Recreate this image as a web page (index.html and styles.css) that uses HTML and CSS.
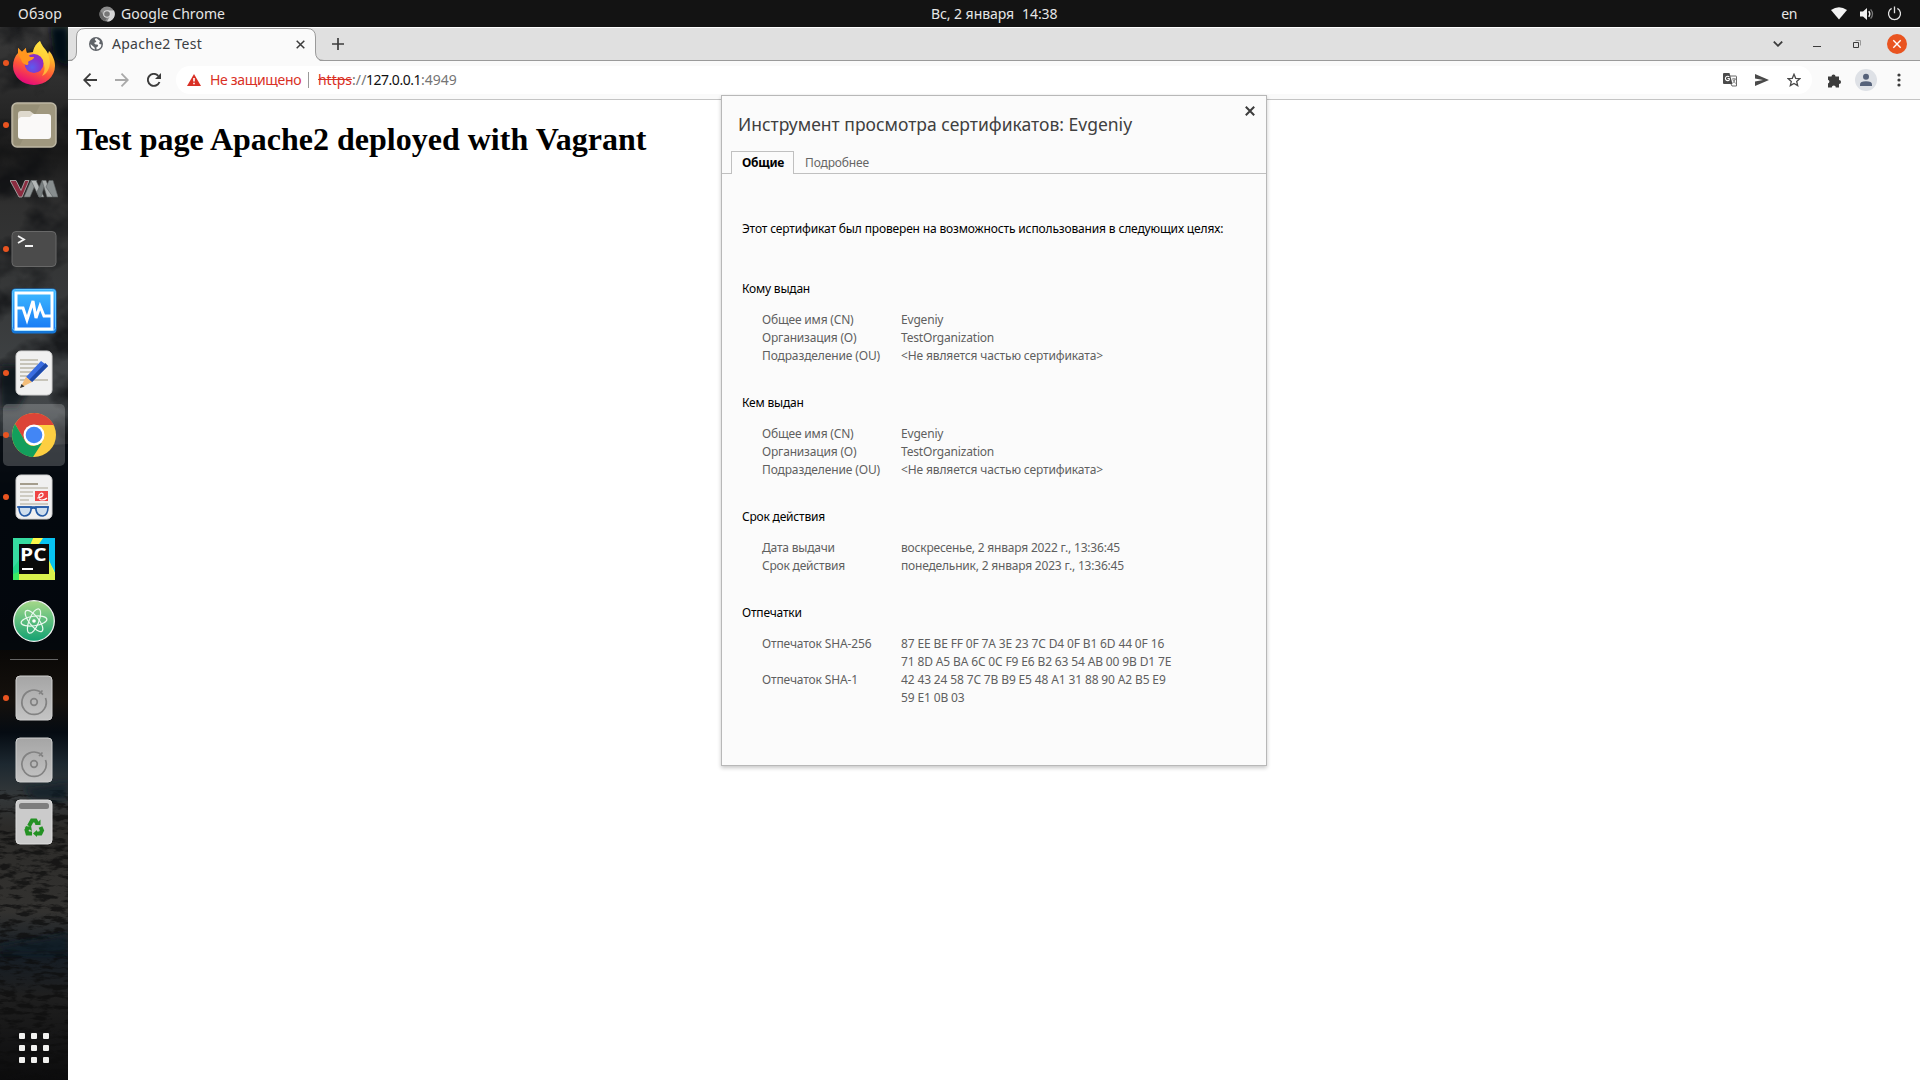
FILE: index.html
```html
<!DOCTYPE html>
<html lang="ru">
<head>
<meta charset="utf-8">
<title>Apache2 Test</title>
<link rel="stylesheet" href="styles.css">
</head>
<body>
<header class="topbar">
  <span class="overview">Обзор</span>
  <svg class="app-icon" width="16" height="16" viewBox="0 0 16 16"><circle cx="8" cy="8" r="7.6" fill="#8b8b8b"/><path d="M8 4.5h7a7.6 7.6 0 0 1-7 11.1l3.2-5.8z" fill="#d5d5d5"/><path d="M1.3 4.4 4.9 10 8 11.6l-2 3.7A7.6 7.6 0 0 1 1.3 4.4z" fill="#666"/><circle cx="8" cy="8" r="3.8" fill="#ddd"/><circle cx="8" cy="8" r="2.8" fill="#777"/></svg>
  <span class="app-name">Google Chrome</span>
  <span class="clock"><span>Вс, 2 января</span><span>14:38</span></span>
  <div class="tray">
    <span class="lang">en</span>
    <svg class="wifi" width="16" height="13" viewBox="0 0 16 13"><path d="M0 3Q8-2.6 16 3L8 12.6z" fill="#f2f2f2"/></svg>
    <svg class="sound" width="16" height="14" viewBox="0 0 16 14"><path d="M1 4.5h3L8 1v12L4 9.5H1z" fill="#f2f2f2"/><path d="M9.8 4.2q2 2.8 0 5.6" fill="none" stroke="#f2f2f2" stroke-width="1.4"/><path d="M11.6 2.4q3.8 4.6 0 9.2" fill="none" stroke="#777" stroke-width="1.3"/></svg>
    <svg width="15" height="15" viewBox="0 0 15 15" fill="none" stroke="#e2e2e2" stroke-width="1.3"><path d="M4.6 2.4a6 6 0 1 0 5.8 0M7.5.5v6.7"/></svg>
  </div>
</header>
<div class="workspace">
  <nav class="dock">
    <svg class="wallpaper" width="68" height="1053" viewBox="0 27 68 1053">
      <defs>
        <linearGradient id="sky" x1="0" y1="0" x2="0" y2="1"><stop offset="0" stop-color="#3a3a3a"/><stop offset=".06" stop-color="#2c2c2c"/><stop offset=".12" stop-color="#191919"/><stop offset=".17" stop-color="#303030"/><stop offset=".27" stop-color="#383a3b"/><stop offset=".36" stop-color="#43474a"/><stop offset=".41" stop-color="#1c2329"/><stop offset=".45" stop-color="#03070d"/><stop offset=".58" stop-color="#070605"/><stop offset=".64" stop-color="#15110d"/><stop offset=".67" stop-color="#050b12"/><stop offset=".7" stop-color="#1d2830"/><stop offset=".73" stop-color="#34383a"/><stop offset=".76" stop-color="#2c2b29"/><stop offset=".84" stop-color="#333230"/><stop offset=".88" stop-color="#151d25"/><stop offset=".92" stop-color="#1f1f1f"/><stop offset="1" stop-color="#0c0c0d"/></linearGradient>
        <filter id="cloud" x="0" y="0" width="1" height="1" color-interpolation-filters="sRGB"><feTurbulence type="fractalNoise" baseFrequency=".02 .025" numOctaves="4" seed="11"/><feColorMatrix values="0 0 0 0 .05  0 0 0 0 .055  0 0 0 0 .065  3 0 0 0 -1.35"/></filter>
        <filter id="sand" x="0" y="0" width="1" height="1" color-interpolation-filters="sRGB"><feTurbulence type="fractalNoise" baseFrequency=".06 .2" numOctaves="4" seed="3"/><feColorMatrix values="0 0 0 0 .05  0 0 0 0 .05  0 0 0 0 .05  5 0 0 0 -2.3"/></filter>
        <filter id="soft" x="-.5" y="-.5" width="2" height="2"><feGaussianBlur stdDeviation="3"/></filter>
      </defs>
      <rect y="27" width="68" height="1053" fill="url(#sky)"/>
      <rect y="27" width="68" height="420" filter="url(#cloud)" opacity=".75"/>
      <path d="M50 27h18v40L54 58z" fill="#030c14" filter="url(#soft)"/>
      <path d="M0 366h20l10 20-12 22H0z" fill="#0b151d" opacity=".8" filter="url(#soft)"/>
      <path d="M0 436q14 0 28 8 14 2 40 0v206H0z" fill="#04080e" opacity=".85"/>
      <rect y="790" width="68" height="290" filter="url(#sand)" opacity=".7"/>
      <path d="M24 788l44-6v18H34zM0 946l68-12v20H0z" fill="#0d1a26" opacity=".7" filter="url(#soft)"/>
    </svg>
    <div class="launchers">
      <div class="slot running"><svg width="42" height="44" viewBox="0 0 42 44">
        <defs><linearGradient id="fx" x1=".8" y1="0" x2=".4" y2="1"><stop offset="0" stop-color="#fff44f"/><stop offset=".35" stop-color="#ffb02a"/><stop offset=".65" stop-color="#ff5a36"/><stop offset="1" stop-color="#e60a7a"/></linearGradient><radialGradient id="fxp" cx=".4" cy=".7"><stop offset="0" stop-color="#5b5cf0"/><stop offset="1" stop-color="#8a2fc7"/></radialGradient></defs>
        <path d="M27 0c2 6 6 8 8 13l1-3c4 4 6 10 6 15a21 19 0 0 1-42 0C0 20 2 15 5 12V7l4 4 4-4v5c3 0 5-1 7-1 1-5 3-8 7-11z" fill="url(#fx)"/>
        <path d="M27 0c2 6 6 8 8 13 5 12-1 20-6 22 5-7 2-15-3-19-3-2-6-3-6-5 1-5 3-8 7-11z" fill="#ffe23f" opacity=".65"/>
        <circle cx="21" cy="22.500" r="9.500" fill="url(#fxp)"/>
        <path d="M5 12V7l4 4 4-4c0 5 2 6 4 9h4c0 3-4 3-6 5 2 4-3 4-6 0-1-4-3-5-4-9z" fill="#ff961e"/>
      </svg></div>
      <div class="slot running"><svg width="46" height="46" viewBox="0 0 46 46"><rect x="1" y="1" width="44" height="44" rx="5" fill="#a0987f" stroke="#bdb7a4" stroke-width="1.5"/><path d="M3 3h26L9 43H3z" fill="#857d68" opacity=".35"/><path d="M7 12q0-3 3-3h9l4 3v8H7z" fill="#ded9cd"/><path d="M7 19q0-3 3-4h9l3-3h15q3 0 3 3v19q0 3-3 3H10q-3 0-3-3z" fill="#faf9f8"/></svg></div>
      <div class="slot"><svg class="vm-icon" width="48" height="20" viewBox="0 0 48 20"><path d="M0 1.500h6l5 10 4-10h4L12 18H9z" fill="#8b2c40" stroke="#a9a5a6" stroke-width=".9"/><g stroke="#5d6263" stroke-width=".6"><path d="M14 18 21 1.500h6L20 18z" fill="#8f9595"/><path d="M21 1.500h5L34 18h-5z" fill="#b4b8b8"/><path d="M27 13 32 1.500h4L31 18h-2z" fill="#777d7e"/><path d="M32 1.500h4L43 18h-6z" fill="#a9adad"/><path d="M36 8l3-6.500h4L48 18h-5z" fill="#888e8f"/></g></svg></div>
      <div class="slot running"><svg width="46" height="36" viewBox="0 0 46 36"><rect x="1" y=".5" width="44" height="35" rx="4" fill="#4b4b4b" stroke="#686868"/><path d="M7 5l6 3.500L7 12M14 15h8" fill="none" stroke="#f5f5f5" stroke-width="1.800"/></svg></div>
      <div class="slot"><svg width="46" height="46" viewBox="0 0 46 46"><defs><linearGradient id="vb" x1="0" y1="0" x2="0" y2="1"><stop offset="0" stop-color="#3bb6ff"/><stop offset="1" stop-color="#197bf5"/></linearGradient></defs><rect x=".5" y=".5" width="45" height="45" rx="4" fill="#1577d8"/><rect x="1.500" y="1.500" width="43" height="41" rx="3" fill="url(#vb)" stroke="#63c8ff"/><rect x="5" y="5" width="36" height="36" fill="url(#vb)" stroke="#fff" stroke-width="3"/><path d="M6 20h6l4 12 6-19 3 17 4-12 4 10h7" fill="none" stroke="#fff" stroke-width="3"/></svg></div>
      <div class="slot running"><svg width="38" height="46" viewBox="0 0 38 46"><rect x="1" y="1" width="36" height="44" rx="5" fill="#f0f0f0" stroke="#d2d2d2"/><path d="M5 10h18M5 14h18M5 18h16M5 22h12M5 26h12M5 30h28" stroke="#b9b5a7" stroke-width="1.5"/><path d="M11 27 26 11l7 5-16 16z" fill="#3a6de0"/><path d="M14 30 30.500 13l2.500 3-16 16z" fill="#1d49a8"/><path d="M11 27l6 5-12 6z" fill="#f3bd79"/><path d="M6.500 34l3 2.500L5 38z" fill="#333"/></svg></div>
      <div class="slot running active"><svg width="46" height="46" viewBox="0 0 46 46"><circle cx="23" cy="23" r="22" fill="#fdce41"/><path d="M23 1A22 22 0 0 1 43 13H23L13.500 28.500 4 12A22 22 0 0 1 23 1z" fill="#dc4437"/><path d="M4 12l10 17q3 5 9 5l8-3-9 14A22 22 0 0 1 4 12z" fill="#139f5c"/><circle cx="23" cy="23" r="10.500" fill="#fff"/><circle cx="23" cy="23" r="8.300" fill="#4286f5"/></svg></div>
      <div class="slot running"><svg width="38" height="46" viewBox="0 0 38 46"><rect x="1" y="1" width="36" height="44" rx="5" fill="#f0f0f0" stroke="#d2d2d2"/><path d="M5 10h18" stroke="#a49d8d" stroke-width="2"/><path d="M5 14h28M5 18h13M5 22h13M5 26h9M5 30h28" stroke="#c2beb2" stroke-width="1.600"/><path d="M20 17h13v10H20z" fill="#ef4444"/><path d="M22 24q7-1 6-4-2-2-4 1-1 5 3 5 3 0 5-2" fill="none" stroke="#fff" stroke-width="1.200"/><g fill="#aecbe9" fill-opacity=".5" stroke="#245aa5" stroke-width="1.600"><path d="M4 33h12v3q-1 6-7 6-5-1-5-9zM21 33h12q0 8-5 9-6 0-7-6z"/><path d="M2 33h32M16 35q2.500-2 5 0" fill="none"/></g></svg></div>
      <div class="slot"><svg width="42" height="42" viewBox="0 0 42 42"><path d="M0 0h42v42H0z" fill="#21d789"/><path d="M20 0h10l12 35v7H6V34z" fill="#fcf84a"/><path d="M26 6 30 0h12v34z" fill="#07c3f2"/><path d="M0 0h20L6 22 0 30z" fill="#36dba0"/><path d="M6 34h30V22l6 15v5H0v-3z" fill="#d9f24c"/><path d="M0 36 6 34v8H0z" fill="#3bea62"/><path d="M6 6h30v30H6z" fill="#0a0a0a"/><path d="M9 31h11" stroke="#fff" stroke-width="2"/><text class="pc" x="7" y="23" textLength="26.500" lengthAdjust="spacingAndGlyphs">PC</text></svg></div>
      <div class="slot"><svg width="42" height="42" viewBox="0 0 42 42"><defs><linearGradient id="at" x1="0" y1="0" x2="0" y2="1"><stop offset="0" stop-color="#a6d989"/><stop offset="1" stop-color="#12a172"/></linearGradient></defs><circle cx="21" cy="21" r="20.300" fill="url(#at)" stroke="#f1f4f2" stroke-width="1.300"/><g fill="none" stroke="#eaf8ee" stroke-width="1.200"><ellipse cx="21" cy="21" rx="13" ry="4.800" transform="rotate(-8 21 21)"/><ellipse cx="21" cy="21" rx="13" ry="4.800" transform="rotate(52 21 21)"/><ellipse cx="21" cy="21" rx="13" ry="4.800" transform="rotate(112 21 21)"/></g><circle cx="21" cy="21" r="1.800" fill="#fff"/></svg></div>
      <hr>
      <div class="slot running"><svg width="38" height="46" viewBox="0 0 38 46"><defs><linearGradient id="dk" x1="0" y1="0" x2="0" y2="1"><stop offset="0" stop-color="#a5a5a5"/><stop offset="1" stop-color="#c4c4c4"/></linearGradient></defs><rect x="1" y="1" width="36" height="44" rx="4" fill="url(#dk)" stroke="#cfcfcf"/><g fill="none" stroke="#828282" stroke-width="1.700"><path d="M25 16.600A12.200 12.200 0 1 0 30.500 23"/><path d="M25 16.600l3 3M24 19l3.500-3.500"/><circle cx="19" cy="27" r="3.300"/></g></svg></div>
      <div class="slot"><svg width="38" height="46" viewBox="0 0 38 46"><rect x="1" y="1" width="36" height="44" rx="4" fill="url(#dk)" stroke="#cfcfcf"/><g fill="none" stroke="#828282" stroke-width="1.700"><path d="M25 16.600A12.200 12.200 0 1 0 30.500 23"/><path d="M25 16.600l3 3M24 19l3.500-3.500"/><circle cx="19" cy="27" r="3.300"/></g></svg></div>
      <div class="slot"><svg width="38" height="46" viewBox="0 0 38 46"><rect x="1" y="1" width="36" height="44" rx="4" fill="#cbcbcb" stroke="#dedede"/><rect x="4" y="4" width="30" height="6" rx="2.500" fill="#7d7d7d"/><g fill="none" stroke="#239123" stroke-width="4"><path d="M14 27l3-5.500h3.500L22.500 25M25.500 28l1.500 3.500-1.500 3H21M17 34.500h-4.500L11.500 31l1.500-3"/></g><path d="M20 26h5.500v-5.500zM22 31v7l-4-3.500zM9.500 28l6.500-1 1 5z" fill="#239123"/></svg></div>
    </div>
    <svg class="all-apps" width="30" height="30" viewBox="0 0 30 30" fill="#f1f1ef"><rect width="6" height="6" rx="1"/><rect x="12" width="6" height="6" rx="1"/><rect x="24" width="6" height="6" rx="1"/><rect y="12" width="6" height="6" rx="1"/><rect x="12" y="12" width="6" height="6" rx="1"/><rect x="24" y="12" width="6" height="6" rx="1"/><rect y="24" width="6" height="6" rx="1"/><rect x="12" y="24" width="6" height="6" rx="1"/><rect x="24" y="24" width="6" height="6" rx="1"/></svg>
  </nav>
  <section class="browser">
    <div class="tabstrip">
      <div class="tab">
        <svg class="tab-shape" width="256" height="34" viewBox="0 0 256 34"><path d="M0 34v-.5q8.500 0 8.500-8.500V9Q8.500.5 17 .5h222q8.500 0 8.500 8.500v16q0 8.500 8.500 8.500v.5z" fill="#fafafa"/><path d="M0 32.500q8.500 0 8.500-8.500V9Q8.500.5 17 .5h222q8.500 0 8.500 8.500v15q0 8.500 8.500 8.500" fill="none" stroke="#9a9a9a"/></svg>
        <svg class="favicon" width="14" height="14" viewBox="0 0 14 14"><circle cx="7" cy="7" r="7" fill="#5f6368"/><path d="M7.500 1.200c-2 .3-2 1.500-1 2.300C8 4 7 5.500 5.500 5.500 5 7 6 7.500 8 7.500c2 .5 1 2.500-.5 2.500v2.600a5.600 5.600 0 0 0 5-5l-2-.6c-1-1 .5-2 .5-3zM1.500 7l4 3.500L6 12.500A5.600 5.600 0 0 1 1.500 7z" fill="#fafafa"/></svg>
        <span class="tab-title">Apache2 Test</span>
        <svg class="tab-close" width="9" height="9" viewBox="0 0 9 9" stroke="#3c3c3c" stroke-width="1.500"><path d="M.7.7l7.600 7.600M8.300.7.7 8.300"/></svg>
      </div>
      <svg class="new-tab" width="12" height="12" viewBox="0 0 12 12" stroke="#3c3c3c" stroke-width="1.700"><path d="M6 0v12M0 6h12"/></svg>
      <div class="window-buttons">
        <svg width="10" height="6" viewBox="0 0 10 6" fill="none" stroke="#3c3c3c" stroke-width="1.800"><path d="M.8.6 5 4.800 9.200.6"/></svg>
        <svg class="minimize" width="8" height="6" viewBox="0 0 8 6"><path d="M0 5h8v1H0z" fill="#3c3c3c"/></svg>
        <svg class="restore" width="8" height="8" viewBox="0 0 8 8" fill="none"><path d="M2.500.5h5v5" stroke="#999"/><path d="M.5 2.500h5v5h-5z" stroke="#3c3c3c"/></svg>
        <svg class="window-close" width="20" height="20" viewBox="0 0 20 20"><circle cx="10" cy="10" r="10" fill="#e95420"/><path d="M6.300 6.300l7.400 7.400M13.700 6.300l-7.400 7.400" stroke="#fff" stroke-width="1.400"/></svg>
      </div>
    </div>
    <div class="toolbar">
      <svg class="nav-icon" width="14" height="14" viewBox="0 0 14 14" fill="none" stroke="#3c3c3c" stroke-width="1.800"><path d="M14 7H1.500M7.500.7 1.200 7l6.300 6.300"/></svg>
      <svg class="nav-icon" width="14" height="14" viewBox="0 0 14 14" fill="none" stroke="#a9a9a9" stroke-width="1.800"><path d="M0 7h12.500M6.500.7 12.800 7l-6.300 6.300"/></svg>
      <svg class="nav-icon" width="14" height="14" viewBox="0 0 14 14"><path d="M12.500 9A6 6 0 1 1 11.300 2.800" fill="none" stroke="#3c3c3c" stroke-width="1.900"/><path d="M14 0v6H8z" fill="#3c3c3c"/></svg>
      <div class="omnibox">
        <svg class="warning" width="14" height="12" viewBox="0 0 14 12"><path d="M7 0l7 12H0z" fill="#d93025"/><path d="M7 4v3.500M7 8.700v1.600" stroke="#fff" stroke-width="1.600"/></svg>
        <span class="insecure">Не защищено</span>
        <span class="divider"></span>
        <span class="url"><span class="scheme">https</span><span class="slashes">://</span><span class="host">127.0.0.1</span><span class="port">:4949</span></span>
        <div class="omni-actions">
          <svg width="14" height="14" viewBox="0 0 14 14"><path d="M6 3h7q.5 0 .5.500v9.500H9l-1-2z" fill="#fafafa" stroke="#6a6a6a"/><path d="M0 1q0-1 1-1h5.500l3 11H1q-1 0-1-1z" fill="#4a4a4a"/><path d="M6.300 4A2.200 2.200 0 1 0 6.300 6.800V5.500H4.500" fill="none" stroke="#fff" stroke-width="1.100"/><path d="M9 6h4M11 5v1M12.200 6q-.7 2.500-2.400 4M10 7l2.500 3.500" fill="none" stroke="#777" stroke-width=".9"/></svg>
          <svg width="14" height="12" viewBox="0 0 14 12"><path d="M0 0l14 6L0 12V7.500L8 6 0 4.500z" fill="#4a4a4a"/></svg>
          <svg width="14" height="14" viewBox="0 0 14 14"><path d="M7 1.300l1.700 4 4.200.3-3.200 2.800 1 4.200L7 10.400l-3.700 2.200 1-4.200L1.100 5.600l4.200-.3z" fill="none" stroke="#4a4a4a" stroke-width="1.300"/></svg>
        </div>
      </div>
      <svg class="extensions" width="15" height="15" viewBox="0 0 15 15"><path d="M1 3.500h3.500a2 2 0 1 1 4 0H12v3.400a2 2 0 1 1 0 4.100v3.500H8.800a2 2 0 0 0-4 0H1v-4a2 2 0 0 0 0-3.800z" fill="#3c3c3c"/></svg>
      <svg class="avatar" width="22" height="22" viewBox="0 0 22 22"><circle cx="11" cy="11" r="11" fill="#dee1e6"/><circle cx="11" cy="7.800" r="3" fill="#56627a"/><path d="M5 17v-1.500q0-3.300 6-3.300t6 3.300V17z" fill="#56627a"/></svg>
      <svg class="menu" width="4" height="14" viewBox="0 0 4 14" fill="#3c3c3c"><circle cx="2" cy="2" r="1.600"/><circle cx="2" cy="7" r="1.600"/><circle cx="2" cy="12" r="1.600"/></svg>
    </div>
    <main class="page"><h1>Test page Apache2 deployed with Vagrant</h1></main>
  </section>
</div>
<section class="dialog">
  <svg class="dialog-close" width="10" height="10" viewBox="0 0 10 10" stroke="#3c3c3c" stroke-width="2"><path d="M.8.8l8.400 8.400M9.200.8.8 9.200"/></svg>
  <h2>Инструмент просмотра сертификатов: Evgeniy</h2>
  <div class="dialog-tabs"><span class="selected">Общие</span><span class="other">Подробнее</span></div>
  <div class="cert">
    <p class="verified">Этот сертификат был проверен на возможность использования в следующих целях:</p>
    <h3>Кому выдан</h3>
    <dl><dt>Общее имя (CN)</dt><dd>Evgeniy</dd><dt>Организация (O)</dt><dd>TestOrganization</dd><dt class="unit">Подразделение (OU)</dt><dd class="unit">&lt;Не является частью сертификата&gt;</dd></dl>
    <h3>Кем выдан</h3>
    <dl><dt>Общее имя (CN)</dt><dd>Evgeniy</dd><dt>Организация (O)</dt><dd>TestOrganization</dd><dt class="unit">Подразделение (OU)</dt><dd class="unit">&lt;Не является частью сертификата&gt;</dd></dl>
    <h3>Срок действия</h3>
    <dl class="dates"><dt>Дата выдачи</dt><dd>воскресенье, 2 января 2022 г., 13:36:45</dd><dt>Срок действия</dt><dd>понедельник, 2 января 2023 г., 13:36:45</dd></dl>
    <h3>Отпечатки</h3>
    <dl class="prints"><dt>Отпечаток SHA-256</dt><dd>87 EE BE FF 0F 7A 3E 23 7C D4 0F B1 6D 44 0F 16<br>71 8D A5 BA 6C 0C F9 E6 B2 63 54 AB 00 9B D1 7E</dd><dt>Отпечаток SHA-1</dt><dd>42 43 24 58 7C 7B B9 E5 48 A1 31 88 90 A2 B5 E9<br>59 E1 0B 03</dd></dl>
  </div>
</section>
</body>
</html>
```
FILE: styles.css
```css
* { box-sizing: border-box; }
body {
  margin: 0; width: 1920px; height: 1080px; overflow: hidden;
  display: flex; flex-direction: column;
  font: 14px "Noto Sans", "Open Sans", sans-serif;
}
svg { display: block; flex: none; }

.topbar {
  height: 27px; flex: none; background: #131313; color: #e6e6e6;
  display: grid; grid-template-columns: 99px 22px 810px 1fr auto;
  align-items: center; white-space: nowrap; line-height: 26px;
}
.overview { padding-left: 18px; letter-spacing: .27px; }
.app-name { letter-spacing: .05px; }
.clock { display: flex; gap: 8px; letter-spacing: -.07px; line-height: 24px; }
.tray { display: flex; align-items: center; padding-right: 18px; }
.lang { letter-spacing: -.4px; margin-right: 34px; }
.wifi { margin-right: 12px; }
.sound { margin-right: 12px; }

.workspace { flex: 1; display: flex; min-height: 0; }
.dock {
  width: 68px; position: relative; background: #111;
  display: flex; flex-direction: column; justify-content: space-between; padding: 5px 3px 17px;
}
.wallpaper { position: absolute; left: 0; top: 0; }
.launchers, .all-apps { position: relative; }
.all-apps { margin-left: 16px; }
.slot { height: 62px; display: flex; align-items: center; justify-content: center; position: relative; border-radius: 5px; }
.active { background: rgba(255, 255, 255, .2); }
.running::before {
  content: ""; position: absolute; left: 0; top: 28px; width: 6px; height: 6px;
  border-radius: 3px; background: #e95420;
}
.vm-icon { margin-top: 3px; }
.launchers hr { height: 1px; width: 48px; border: 0; background: #666; margin: 7px 7px; }
.pc { font: 700 18.5px "Open Sans", "Noto Sans", sans-serif; fill: #fff; }

.browser { flex: 1; display: flex; flex-direction: column; background: #fff; border-top: 1px solid #fff; }
.tabstrip { height: 33px; flex: none; background: #e0e0e0; border-bottom: 1px solid #9a9a9a; display: flex; align-items: center; }
.tab { width: 248px; height: 33px; position: relative; display: flex; align-items: center; padding-left: 21px; }
.tab-shape { position: absolute; left: 0; top: 0; }
.favicon, .tab-title, .tab-close { position: relative; }
.tab-title { color: #3c4043; letter-spacing: .27px; margin-left: 9px; flex: 1; line-height: 20px; }
.tab-close { margin-right: 11px; }
.new-tab { margin-left: 16px; }
.window-buttons { margin-left: auto; display: flex; align-items: center; padding-right: 13px; }
.minimize { margin-left: 30px; }
.restore { margin-left: 32px; }
.window-close { margin-left: 26px; }

.toolbar {
  height: 39px; flex: none; background: #fafafa; border-bottom: 1px solid #c4c4c4;
  display: flex; align-items: center; padding-left: 15px;
}
.nav-icon { margin-right: 18px; }
.omnibox {
  width: 1636px; height: 28px; border-radius: 14px; background: #fff; margin-left: -3px;
  display: flex; align-items: center; padding-left: 11px; white-space: nowrap; line-height: 20px;
}
.insecure { width: 98px; margin-left: 9px; color: #d93025; letter-spacing: -.33px; }
.divider { width: 1px; height: 16px; background: #9a9a9a; }
.url { display: flex; margin-left: 9px; color: #757575; }
.scheme { color: #d93025; text-decoration: line-through; width: 34px; letter-spacing: -.03px; }
.slashes { width: 14px; letter-spacing: .1px; }
.host { color: #111; width: 55px; letter-spacing: -.48px; }
.port { letter-spacing: 0; }
.omni-actions { margin-left: auto; display: flex; align-items: center; gap: 18px; padding-right: 11px; }
.extensions { margin-left: 15px; }
.avatar { margin-left: 13px; }
.menu { margin-left: 20px; }

.page { flex: 1; padding: 21px 8px; }
.page h1 { margin: 0; font: 700 32px/37px "Liberation Serif", serif; color: #000; }

.dialog {
  position: absolute; left: 721px; top: 95px; width: 546px; height: 671px;
  background: #fbfbfb; border: 1px solid #b8b8b8; box-shadow: 0 2px 4px rgba(0, 0, 0, .22);
  font-size: 12px; line-height: 18px; letter-spacing: -.18px; white-space: nowrap;
}
.dialog-close { position: absolute; right: 11px; top: 10px; }
.dialog h2 { margin: 0; padding: 16px 0 0 16px; height: 55px; font-size: 17.5px; line-height: 25px; font-weight: 400; letter-spacing: 0; color: #404040; }
.dialog-tabs { height: 23px; display: flex; padding-left: 9px; border-bottom: 1px solid #c0c0c0; line-height: 22px; }
.selected { width: 63px; height: 23px; border: 1px solid #c0c0c0; border-bottom: 0; background: #fbfbfb; padding-left: 10px; font-weight: 700; letter-spacing: -.27px; line-height: 21px; }
.other { padding-left: 11px; color: #666; letter-spacing: -.14px; line-height: 23px; }
.cert { padding: 46px 20px 0; }
.cert p { margin: 0 0 42px; letter-spacing: -.15px; }
.cert h3 { margin: 0 0 13px; font: inherit; letter-spacing: -.2px; }
.cert dl { margin: 0 0 29px; padding-left: 20px; display: grid; grid-template-columns: 139px 1fr; color: #5f5f5f; }
.cert dd { margin: 0; }
.cert .unit { letter-spacing: -.13px; }
.dates { letter-spacing: -.2px; }
.prints { letter-spacing: -.14px; }
```
